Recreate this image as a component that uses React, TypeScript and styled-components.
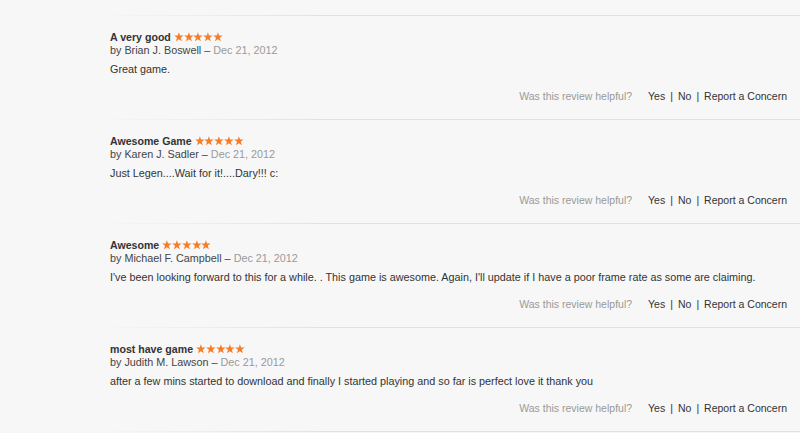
import * as React from "react";
import styled, { createGlobalStyle } from "styled-components";

interface IReview {
  title: string;
  author: string;
  date: string;
  body: string;
  rating: number;
}

const reviews: IReview[] = [
  {
    title: "A very good",
    author: "Brian J. Boswell",
    date: "Dec 21, 2012",
    body: "Great game.",
    rating: 5,
  },
  {
    title: "Awesome Game",
    author: "Karen J. Sadler",
    date: "Dec 21, 2012",
    body: "Just Legen....Wait for it!....Dary!!! c:",
    rating: 5,
  },
  {
    title: "Awesome",
    author: "Michael F. Campbell",
    date: "Dec 21, 2012",
    body: "I've been looking forward to this for a while. . This game is awesome. Again, I'll update if I have a poor frame rate as some are claiming.",
    rating: 5,
  },
  {
    title: "most have game",
    author: "Judith M. Lawson",
    date: "Dec 21, 2012",
    body: "after a few mins started to download and finally I started playing and so far is perfect love it thank you",
    rating: 5,
  },
];

function Stars(props: { count: number }) {
  const { count } = props;
  return (
    <StarRow>
      {Array.from({ length: count }).map((_, i) => (
        <svg key={i} width="9.8" height="9.5" viewBox="0 0 10 10">
          <path
            d="M5 0.2 L6.2 3.6 L9.9 3.7 L7 6 L8.1 9.7 L5 7.5 L1.9 9.7 L3 6 L0.1 3.7 L3.8 3.6 Z"
            fill="#f47d2a"
          />
        </svg>
      ))}
    </StarRow>
  );
}

function Review(props: { review: IReview }) {
  const { review } = props;
  return (
    <ReviewBlock>
      <Title>
        {review.title}
        <Stars count={review.rating} />
      </Title>
      <Byline>
        by {review.author} – <DateText>{review.date}</DateText>
      </Byline>
      <Body>{review.body}</Body>
      <HelpfulRow>
        <Question>Was this review helpful?</Question>
        <Actions>
          <Action>Yes</Action>
          <Sep>|</Sep>
          <Action>No</Action>
          <Sep>|</Sep>
          <Action>Report a Concern</Action>
        </Actions>
      </HelpfulRow>
    </ReviewBlock>
  );
}

export default function App() {
  return (
    <>
      <GlobalStyle />
      <ReviewList>
        {reviews.map((r, i) => (
          <React.Fragment key={i}>
            <Divider />
            <Review review={r} />
          </React.Fragment>
        ))}
        <Divider />
      </ReviewList>
    </>
  );
}

const GlobalStyle = createGlobalStyle`
  html, body {
    margin: 0;
    padding: 0;
    background: #f7f7f7;
  }
  body {
    font-family: "Liberation Sans", Helvetica, Arial, sans-serif;
    font-size: 10.5px;
    color: #333;
  }
`;

const ReviewList = styled.section`
  padding-top: 15px;
  width: 800px;
  height: 433px;
  overflow: hidden;
  box-sizing: border-box;
`;

const Divider = styled.div`
  height: 1px;
  background: linear-gradient(
    to right,
    rgba(224, 224, 224, 0) 95px,
    #e2e2e2 320px
  );
`;

const ReviewBlock = styled.article`
  padding: 15px 13px 16px 110px;
  display: flex;
  flex-direction: column;
`;

const Title = styled.h3`
  margin: 0;
  font-size: 10.6px;
  line-height: 13px;
  font-weight: bold;
  color: #333;
  display: flex;
  align-items: center;
`;

const StarRow = styled.span`
  display: inline-flex;
  margin-left: 3px;
  margin-top: -1px;
`;

const Byline = styled.div`
  font-size: 10.8px;
  line-height: 13px;
  color: #444;
`;

const DateText = styled.span`
  color: #9a9a9a;
`;

const Body = styled.p`
  margin: 5px 0 0;
  font-size: 10.8px;
  line-height: 14px;
  color: #333;
`;

const HelpfulRow = styled.div`
  margin-top: 13px;
  display: flex;
  justify-content: flex-end;
  align-items: center;
  line-height: 14px;
`;

const Question = styled.span`
  color: #999;
  margin-right: 16px;
`;

const Actions = styled.span`
  display: inline-flex;
  align-items: center;
  color: #333;
`;

const Action = styled.a`
  color: #333;
  cursor: pointer;
`;

const Sep = styled.span`
  margin: 0 5px 0 5px;
  color: #333;
`;
